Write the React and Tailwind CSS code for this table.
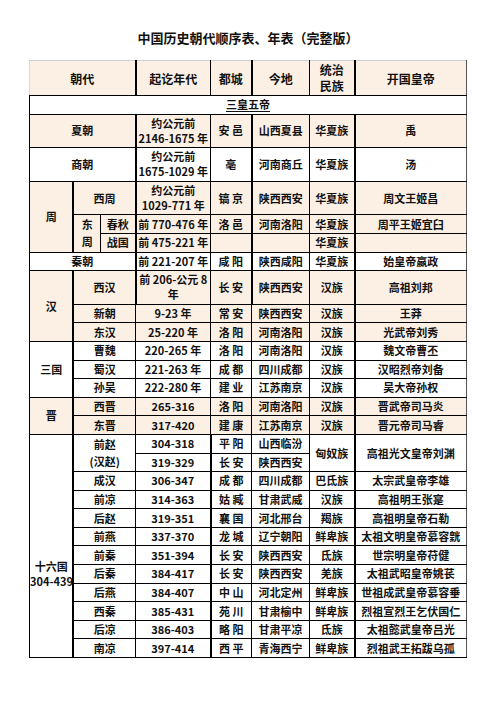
import clsx from "clsx";

const Td = ({ children, className, ...rest }) => (
  <td
    className={clsx("border border-black p-0 text-center align-middle leading-[15px]", className)}
    {...rest}
  >
    {children}
  </td>
);

const one = "h-[18.6px]";
const two = "h-[33.6px]";

// rows of 十六国, after 前赵
const sixteen = [
  ["成汉", "306-347", "成 都", "四川成都", "巴氐族", "太宗武皇帝李雄"],
  ["前凉", "314-363", "姑 臧", "甘肃武威", "汉族", "高祖明王张寔"],
  ["后赵", "319-351", "襄 国", "河北邢台", "羯族", "高祖明皇帝石勒"],
  ["前燕", "337-370", "龙 城", "辽宁朝阳", "鲜卑族", "太祖文明皇帝慕容皝"],
  ["前秦", "351-394", "长 安", "陕西西安", "氐族", "世宗明皇帝苻健"],
  ["后秦", "384-417", "长 安", "陕西西安", "羌族", "太祖武昭皇帝姚苌"],
  ["后燕", "384-407", "中 山", "河北定州", "鲜卑族", "世祖成武皇帝慕容垂"],
  ["西秦", "385-431", "苑 川", "甘肃榆中", "鲜卑族", "烈祖宣烈王乞伏国仁"],
  ["后凉", "386-403", "略 阳", "甘肃平凉", "氐族", "太祖懿武皇帝吕光"],
  ["南凉", "397-414", "西 平", "青海西宁", "鲜卑族", "烈祖武王拓跋乌孤"],
];

const App = () => {
  return (
    <div
      className="w-[496px] h-[702px] bg-white text-[#111] font-bold overflow-hidden"
      style={{ fontFamily: '"Noto Sans CJK SC", "Noto Sans", sans-serif' }}
    >
      <h1 className="pt-[30px] h-[46px] text-center text-[13px] leading-[16px] font-bold">
        中国历史朝代顺序表、年表（完整版）
      </h1>
      <table className="mt-[14px] mx-auto w-[437px] table-fixed border-collapse text-[11px]">
        <colgroup>
          <col className="w-[44px]" />
          <col className="w-[27px]" />
          <col className="w-[35px]" />
          <col className="w-[75px]" />
          <col className="w-[41px]" />
          <col className="w-[58px]" />
          <col className="w-[45px]" />
          <col className="w-[112px]" />
        </colgroup>
        <tbody>
          <tr className="h-[35px] bg-[#fcefe4] text-[12px]">
            <Td colSpan={3} className="border-t-[#cfcfcf] border-l-[#d8d8d8]">朝代</Td>
            <Td className="border-l-2 border-t-[#cfcfcf]">起讫年代</Td>
            <Td className="border-t-[#cfcfcf]">都城</Td>
            <Td className="border-l-2 border-t-[#cfcfcf]">今地</Td>
            <Td className="border-t-[#cfcfcf] leading-[16px]">统治<br />民族</Td>
            <Td className="border-l-2 border-t-[#cfcfcf] border-r-[#555]">开国皇帝</Td>
          </tr>
          <tr className={clsx(one, "bg-white")}>
            <Td colSpan={8} className="border-r-[#555]">
              <span className="underline underline-offset-2">三皇五帝</span>
            </Td>
          </tr>
          <tr className={clsx(two, "bg-[#fcefe4]")}>
            <Td colSpan={3}>夏朝</Td>
            <Td className="border-l-2">约公元前<br />2146-1675 年</Td>
            <Td>安 邑</Td>
            <Td className="border-l-2">山西夏县</Td>
            <Td>华夏族</Td>
            <Td className="border-l-2 border-r-[#555]">禹</Td>
          </tr>
          <tr className={clsx(two, "bg-white")}>
            <Td colSpan={3}>商朝</Td>
            <Td className="border-l-2">约公元前<br />1675-1029 年</Td>
            <Td>亳</Td>
            <Td className="border-l-2">河南商丘</Td>
            <Td>华夏族</Td>
            <Td className="border-l-2 border-r-[#555]">汤</Td>
          </tr>
          <tr className={clsx(two, "bg-[#fcefe4]")}>
            <Td rowSpan={3}>周</Td>
            <Td colSpan={2} className="border-l-2">西周</Td>
            <Td className="border-l-2">约公元前<br />1029-771 年</Td>
            <Td>镐 京</Td>
            <Td className="border-l-2">陕西西安</Td>
            <Td>华夏族</Td>
            <Td className="border-l-2 border-r-[#555]">周文王姬昌</Td>
          </tr>
          <tr className={clsx(one, "bg-[#fcefe4]")}>
            <Td rowSpan={2} className="border-l-2 leading-[17px]">东<br />周</Td>
            <Td>春秋</Td>
            <Td className="border-l-2 whitespace-nowrap">前 770-476 年</Td>
            <Td>洛 邑</Td>
            <Td className="border-l-2">河南洛阳</Td>
            <Td>华夏族</Td>
            <Td className="border-l-2 border-r-[#555]">周平王姬宜臼</Td>
          </tr>
          <tr className={clsx(one, "bg-[#fcefe4]")}>
            <Td>战国</Td>
            <Td className="border-l-2 whitespace-nowrap">前 475-221 年</Td>
            <Td></Td>
            <Td className="border-l-2"></Td>
            <Td>华夏族</Td>
            <Td className="border-l-2 border-r-[#555]"></Td>
          </tr>
          <tr className={clsx(one, "bg-white")}>
            <Td colSpan={3}>秦朝</Td>
            <Td className="border-l-2 whitespace-nowrap">前 221-207 年</Td>
            <Td>咸 阳</Td>
            <Td className="border-l-2">陕西咸阳</Td>
            <Td>华夏族</Td>
            <Td className="border-l-2 border-r-[#555]">始皇帝嬴政</Td>
          </tr>
          <tr className={clsx(two, "bg-[#fcefe4]")}>
            <Td rowSpan={3}>汉</Td>
            <Td colSpan={2} className="border-l-2">西汉</Td>
            <Td className="border-l-2">前 206-公元 8<br />年</Td>
            <Td>长 安</Td>
            <Td className="border-l-2">陕西西安</Td>
            <Td>汉族</Td>
            <Td className="border-l-2 border-r-[#555]">高祖刘邦</Td>
          </tr>
          <tr className={clsx(one, "bg-[#fcefe4]")}>
            <Td colSpan={2} className="border-l-2">新朝</Td>
            <Td>9-23 年</Td>
            <Td>常 安</Td>
            <Td>陕西西安</Td>
            <Td>汉族</Td>
            <Td className="border-l-2 border-r-[#555]">王莽</Td>
          </tr>
          <tr className={clsx(one, "bg-[#fcefe4]")}>
            <Td colSpan={2} className="border-l-2">东汉</Td>
            <Td>25-220 年</Td>
            <Td>洛 阳</Td>
            <Td>河南洛阳</Td>
            <Td>汉族</Td>
            <Td className="border-l-2 border-r-[#555]">光武帝刘秀</Td>
          </tr>
          <tr className={clsx(one, "bg-white")}>
            <Td rowSpan={3}>三国</Td>
            <Td colSpan={2} className="border-l-2">曹魏</Td>
            <Td>220-265 年</Td>
            <Td>洛 阳</Td>
            <Td>河南洛阳</Td>
            <Td>汉族</Td>
            <Td className="border-l-2 border-r-[#555]">魏文帝曹丕</Td>
          </tr>
          <tr className={clsx(one, "bg-white")}>
            <Td colSpan={2} className="border-l-2">蜀汉</Td>
            <Td>221-263 年</Td>
            <Td>成 都</Td>
            <Td>四川成都</Td>
            <Td>汉族</Td>
            <Td className="border-l-2 border-r-[#555]">汉昭烈帝刘备</Td>
          </tr>
          <tr className={clsx(one, "bg-white")}>
            <Td colSpan={2} className="border-l-2">孙吴</Td>
            <Td>222-280 年</Td>
            <Td>建 业</Td>
            <Td>江苏南京</Td>
            <Td>汉族</Td>
            <Td className="border-l-2 border-r-[#555]">吴大帝孙权</Td>
          </tr>
          <tr className={clsx(one, "bg-[#fcefe4]")}>
            <Td rowSpan={2}>晋</Td>
            <Td colSpan={2} className="border-l-2">西晋</Td>
            <Td>265-316</Td>
            <Td>洛 阳</Td>
            <Td>河南洛阳</Td>
            <Td>汉族</Td>
            <Td className="border-l-2 border-r-[#555]">晋武帝司马炎</Td>
          </tr>
          <tr className={clsx(one, "bg-[#fcefe4]")}>
            <Td colSpan={2} className="border-l-2">东晋</Td>
            <Td>317-420</Td>
            <Td>建 康</Td>
            <Td>江苏南京</Td>
            <Td>汉族</Td>
            <Td className="border-l-2 border-r-[#555]">晋元帝司马睿</Td>
          </tr>
          <tr className={clsx(one, "bg-white")}>
            <Td rowSpan={13} className="align-top pt-[124px] leading-[15px] whitespace-nowrap">
              十六国<br />304-439
            </Td>
            <Td rowSpan={2} colSpan={2} className="border-l-2 leading-[17px]">前赵<br />(汉赵)</Td>
            <Td>304-318</Td>
            <Td className="border-l-2">平 阳</Td>
            <Td>山西临汾</Td>
            <Td rowSpan={2}>匈奴族</Td>
            <Td rowSpan={2} className="border-l-2 border-r-[#555]">高祖光文皇帝刘渊</Td>
          </tr>
          <tr className={clsx(one, "bg-white")}>
            <Td>319-329</Td>
            <Td className="border-l-2">长 安</Td>
            <Td>陕西西安</Td>
          </tr>
          {sixteen.map((r) => (
            <tr key={r[0]} className={clsx(one, "bg-white")}>
              <Td colSpan={2} className="border-l-2">{r[0]}</Td>
              <Td>{r[1]}</Td>
              <Td className="border-l-2">{r[2]}</Td>
              <Td>{r[3]}</Td>
              <Td>{r[4]}</Td>
              <Td className="border-l-2 border-r-[#555] whitespace-nowrap">{r[5]}</Td>
            </tr>
          ))}
        </tbody>
      </table>
    </div>
  );
};

export default App;
